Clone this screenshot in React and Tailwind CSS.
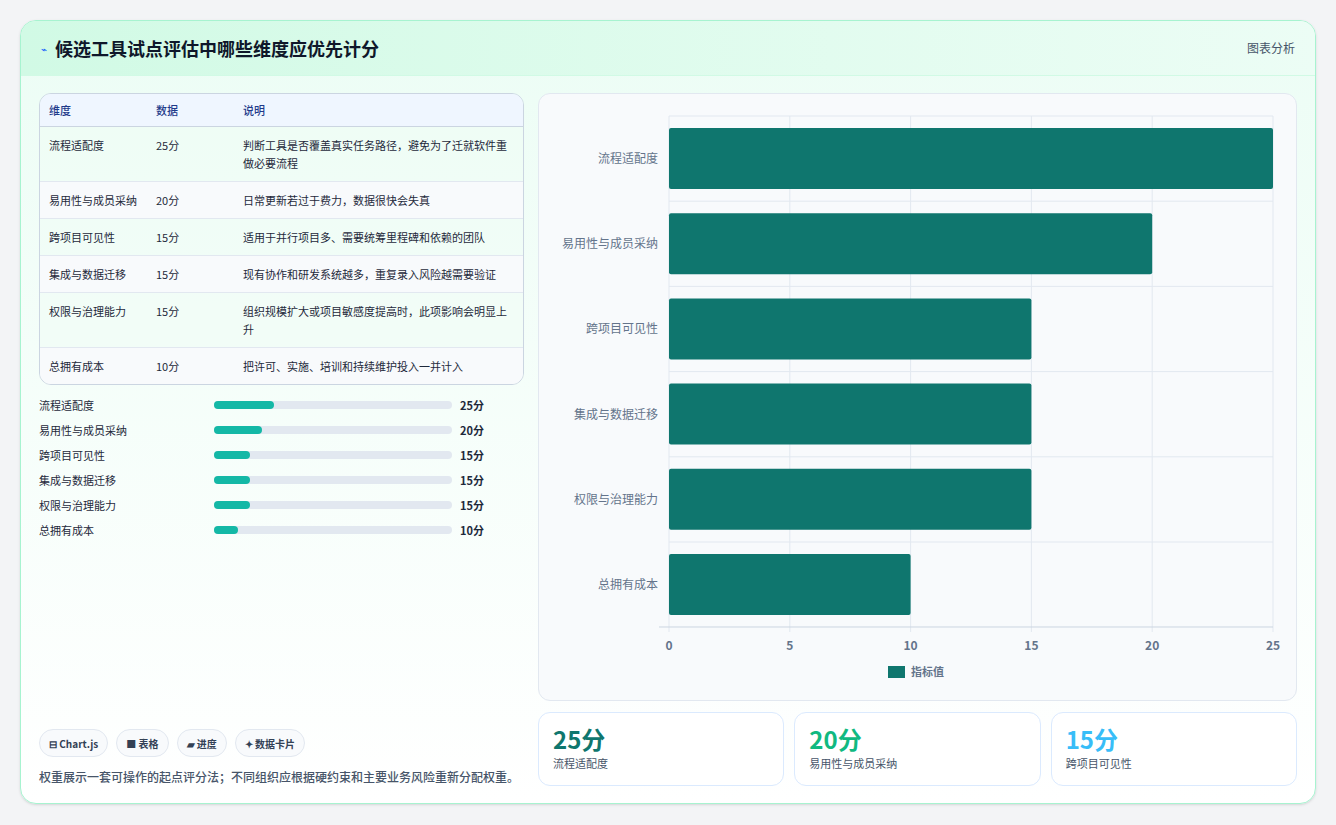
const rows=[["流程适配度","25分","判断工具是否覆盖真实任务路径，避免为了迁就软件重做必要流程",25],["易用性与成员采纳","20分","日常更新若过于费力，数据很快会失真",20],["跨项目可见性","15分","适用于并行项目多、需要统筹里程碑和依赖的团队",15],["集成与数据迁移","15分","现有协作和研发系统越多，重复录入风险越需要验证",15],["权限与治理能力","15分","组织规模扩大或项目敏感度提高时，此项影响会明显上升",15],["总拥有成本","10分","把许可、实施、培训和持续维护投入一并计入",10]];
const f={fontFamily:'"Noto Sans CJK SC","Noto Sans",sans-serif'};
export default function App(){
const X0=130,W=604,T=22,RH=85.2;
return(<div style={f} className="w-[1336px] h-[825px] bg-[#f3f4f6] pt-5 pl-5">
<div className="w-[1296px] h-[784px] rounded-2xl border border-[#a7f3d0] bg-gradient-to-b from-[#ecfdf5] to-white overflow-hidden flex flex-col shadow">
<div className="h-[55px] flex items-center justify-between px-5 bg-gradient-to-r from-[#d1fae5] to-[#ecfdf5] border-b border-[#d1fae5]">
<div className="flex items-center gap-2"><span className="text-[10px] text-blue-600">⌁</span><span className="text-[18px] font-bold text-[#0f172a]">候选工具试点评估中哪些维度应优先计分</span></div>
<span className="text-[12px] text-[#475569]">图表分析</span></div>
<div className="flex gap-[14px] px-[18px] pt-[17px] flex-1">
<div className="w-[486px] flex flex-col">
<div className="rounded-xl border border-[#cbd5e1] overflow-hidden text-[11px] text-[#1e293b]">
<div className="flex h-[33px] items-center bg-[#eff6ff] text-[#1e3a8a] font-medium border-b border-[#cbd5e1]"><span className="w-[116px] pl-[9px]">维度</span><span className="w-[87px]">数据</span><span>说明</span></div>
{rows.map((r,i)=>(<div key={i} className={"flex py-[9px] leading-[18px] border-b border-[#e2e8f0] last:border-0 "+(i%2?"bg-[#f8fafc]":"bg-[#f0fdf4]/40")}><span className="w-[116px] pl-[9px] shrink-0">{r[0]}</span><span className="w-[87px] shrink-0">{r[1]}</span><span className="pr-4">{r[2]}</span></div>))}
</div>
<div className="flex flex-col gap-[7px] mt-[11px] text-[11px] text-[#1e293b]">
{rows.map((r,i)=>(<div key={i} className="flex items-center h-[18px]"><span className="w-[175px]">{r[0]}</span><div className="w-[238px] h-[8px] rounded-full bg-[#e2e8f0] mr-2"><div className="h-full rounded-full bg-[#14b8a6]" style={{width:r[3]+"%"}}/></div><span className="font-bold">{r[1]}</span></div>))}
</div>
<div className="mt-auto mb-[17px]">
<div className="flex gap-2 text-[10px] font-bold text-[#334155]">
{["⊟ Chart.js","■ 表格","▰ 进度","✦ 数据卡片"].map(t=>(<span key={t} className="px-[9px] h-[28px] flex items-center rounded-full border border-[#e2e8f0] bg-[#f8fafc]">{t}</span>))}</div>
<p className="mt-[10px] text-[12px] leading-[19px] font-medium text-[#475569]">权重展示一套可操作的起点评分法；不同组织应根据硬约束和主要业务风险重新分配权重。</p></div>
</div>
<div className="flex-1 flex flex-col gap-[11px]">
<div className="h-[608px] rounded-xl border border-[#e2e8f0] bg-[#f8fafc]">
<svg width="757" height="606">
{[0,5,10,15,20,25].map(v=>{const x=X0+W*v/25;return(<g key={v}><line x1={x} y1={T} x2={x} y2={538} stroke="#e2e8f0"/><text x={x} y={556} fontSize="12" fill="#64748b" textAnchor="middle" fontWeight="600">{v}</text></g>)})}
{rows.map((r,i)=>{const y=T+i*RH;return(<g key={i}><line x1={X0} y1={y} x2={X0+W} y2={y} stroke="#e2e8f0"/><rect x={X0} y={y+12} width={W*r[3]/25} height={61} rx="2" fill="#0f766e"/><text x={119} y={y+47} fontSize="12" fill="#64748b" textAnchor="end">{r[0]}</text></g>)})}
<line x1={X0-10} y1={533} x2={X0+W} y2={533} stroke="#cbd5e1"/>
<rect x={349} y={572} width={17} height={12} fill="#0f766e"/><text x={372} y={582} fontSize="11" fill="#64748b" fontWeight="600">指标值</text>
</svg></div>
<div className="grid grid-cols-3 gap-[10px]">
{[["25分","#0f766e","流程适配度"],["20分","#10b981","易用性与成员采纳"],["15分","#38bdf8","跨项目可见性"]].map(c=>(<div key={c[0]} className="h-[74px] rounded-xl border border-[#dbeafe] bg-white px-[14px] pt-[10px]"><div className="text-[24px] font-bold leading-[32px]" style={{color:c[1]}}>{c[0]}</div><div className="text-[11px] text-[#475569]">{c[2]}</div></div>))}
</div></div></div></div></div>);}
